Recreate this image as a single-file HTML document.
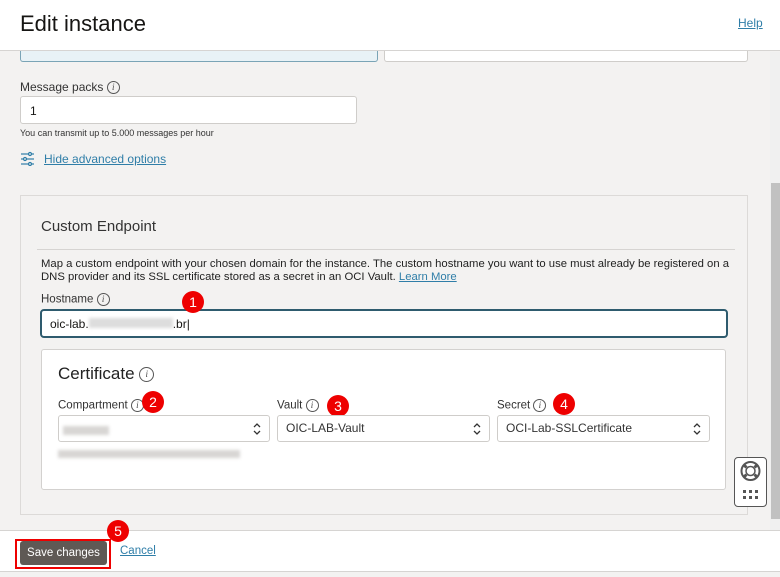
<!DOCTYPE html>
<html><head><style>
*{box-sizing:border-box;margin:0;padding:0}
body{width:780px;height:577px;overflow:hidden;background:#f3f2f1;font-family:"Liberation Sans",sans-serif;color:#161513;position:relative}
.abs{position:absolute}
.info{display:inline-block;width:13px;height:13px;border:1.3px solid #555;border-radius:50%;font-size:9px;text-align:center;line-height:11px;font-style:italic;color:#444;vertical-align:middle;font-family:"Liberation Serif",serif}
.badge{position:absolute;width:22px;height:22px;border-radius:50%;background:#e00;color:#fff;font-size:14px;text-align:center;line-height:22px}
.sel{position:absolute;height:27px;background:#fff;border:1px solid #cfcdca;border-radius:3px;font-size:12px;line-height:25px;padding-left:8px;color:#333}
.sel svg{position:absolute;right:8px;top:7px}
.blur{background:#d8d6d4;filter:blur(1.5px);position:absolute}
</style></head><body>
<div class="abs" style="left:0;top:0;width:780px;height:51px;background:#fff;border-bottom:1px solid #d6d4d2"></div>
<div class="abs" style="left:20px;top:11px;font-size:22px">Edit instance</div>
<div class="abs" style="left:738px;top:16px;font-size:12px;color:#2f7ea8;text-decoration:underline">Help</div>
<div class="abs" style="left:20px;top:51px;width:358px;height:11px;background:#e8f2f6;border:1px solid #7aa4b6;border-top:none;border-radius:0 0 3px 3px"></div>
<div class="abs" style="left:384px;top:51px;width:364px;height:11px;background:#fff;border:1px solid #cfcdca;border-top:none;border-radius:0 0 3px 3px"></div>
<div class="abs" style="left:20px;top:80px;font-size:12px;color:#333">Message packs <span class="info">i</span></div>
<div class="abs" style="left:20px;top:96px;width:337px;height:28px;background:#fff;border:1px solid #cfcdca;border-radius:3px;font-size:12px;padding:7px 9px">1</div>
<div class="abs" style="left:20px;top:128px;font-size:9px;color:#333">You can transmit up to 5.000 messages per hour</div>
<svg class="abs" style="left:20px;top:151px" width="15" height="15" viewBox="0 0 15 15" stroke="#2f7ea8" fill="none" stroke-width="1.2"><line x1="1" y1="3" x2="14" y2="3"/><circle cx="10" cy="3" r="1.5" fill="#f3f2f1"/><line x1="1" y1="8" x2="14" y2="8"/><circle cx="5" cy="8" r="1.5" fill="#f3f2f1"/><line x1="1" y1="13" x2="14" y2="13"/><circle cx="10" cy="13" r="1.5" fill="#f3f2f1"/></svg>
<div class="abs" style="left:44px;top:152px;font-size:12px;color:#2f7ea8;text-decoration:underline">Hide advanced options</div>
<div class="abs" style="left:20px;top:195px;width:728px;height:320px;border:1px solid #dcdad8"></div>
<div class="abs" style="left:41px;top:218px;font-size:15px;color:#333">Custom Endpoint</div>
<div class="abs" style="left:37px;top:249px;width:698px;height:1px;background:#d6d4d2"></div>
<div class="abs" style="left:41px;top:258px;width:690px;font-size:11.3px;line-height:13px;color:#222">Map a custom endpoint with your chosen domain for the instance. The custom hostname you want to use must already be registered on a DNS provider and its SSL certificate stored as a secret in an OCI Vault. <span style="color:#2f7ea8;text-decoration:underline">Learn More</span></div>
<div class="abs" style="left:41px;top:293px;font-size:11.5px;color:#333">Hostname <span class="info">i</span></div>
<div class="abs" style="left:40px;top:309px;width:688px;height:29px;background:#fff;border:2px solid #2e5b6e;border-radius:4px;font-size:12px;padding:6px 8px">oic-lab.<span style="display:inline-block;width:84px;height:10px;background:#ddd;filter:blur(1.5px)"></span>.br|</div>
<div class="badge" style="left:182px;top:291px">1</div>
<div class="abs" style="left:41px;top:349px;width:685px;height:141px;background:#fff;border:1px solid #d3d1cf;border-radius:3px"></div>
<div class="abs" style="left:58px;top:364px;font-size:17px;color:#222">Certificate <span class="info" style="width:15px;height:15px;line-height:13px">i</span></div>
<div class="abs" style="left:58px;top:399px;font-size:11.5px;color:#333">Compartment <span class="info">i</span></div>
<div class="badge" style="left:142px;top:391px">2</div>
<div class="abs" style="left:277px;top:399px;font-size:11.5px;color:#333">Vault <span class="info">i</span></div>
<div class="badge" style="left:327px;top:395px">3</div>
<div class="abs" style="left:497px;top:399px;font-size:11.5px;color:#333">Secret <span class="info">i</span></div>
<div class="badge" style="left:553px;top:393px">4</div>
<div class="sel" style="left:58px;top:415px;width:212px"><span class="blur" style="left:4px;top:10px;width:46px;height:9px"></span><svg width="8" height="12" viewBox="0 0 8 12" fill="none" stroke="#333" stroke-width="1.3"><path d="M1 4L4 1L7 4M1 8L4 11L7 8"/></svg></div>
<div class="sel" style="left:277px;top:415px;width:213px">OIC-LAB-Vault<svg width="8" height="12" viewBox="0 0 8 12" fill="none" stroke="#333" stroke-width="1.3"><path d="M1 4L4 1L7 4M1 8L4 11L7 8"/></svg></div>
<div class="sel" style="left:497px;top:415px;width:213px">OCI-Lab-SSLCertificate<svg width="8" height="12" viewBox="0 0 8 12" fill="none" stroke="#333" stroke-width="1.3"><path d="M1 4L4 1L7 4M1 8L4 11L7 8"/></svg></div>
<div class="blur" style="left:58px;top:450px;width:182px;height:8px"></div>
<div class="abs" style="left:734px;top:457px;width:33px;height:50px;background:#fff;border:1.5px solid #555;border-radius:4px"></div>
<svg class="abs" style="left:738px;top:460px" width="25" height="44" viewBox="0 0 25 44"><circle cx="12.5" cy="11" r="9" fill="none" stroke="#555" stroke-width="2"/><circle cx="12.5" cy="11" r="4.5" fill="none" stroke="#555" stroke-width="1.5"/><g stroke="#555" stroke-width="3"><line x1="6" y1="5" x2="8.5" y2="7.5"/><line x1="19" y1="5" x2="16.5" y2="7.5"/><line x1="6" y1="17" x2="8.5" y2="14.5"/><line x1="19" y1="17" x2="16.5" y2="14.5"/></g><g fill="#555"><rect x="5" y="30" width="3" height="3"/><rect x="11" y="30" width="3" height="3"/><rect x="17" y="30" width="3" height="3"/><rect x="5" y="36" width="3" height="3"/><rect x="11" y="36" width="3" height="3"/><rect x="17" y="36" width="3" height="3"/></g></svg>
<div class="abs" style="left:770px;top:52px;width:10px;height:478px;background:#f0f0f0"></div>
<div class="abs" style="left:771px;top:183px;width:9px;height:336px;background:#c1c1c1"></div>
<div class="abs" style="left:0;top:530px;width:780px;height:42px;background:#fff;border-top:1px solid #d6d4d2;border-bottom:1px solid #d6d4d2"></div>
<div class="abs" style="left:15px;top:539px;width:96px;height:30px;border:2px solid #e00"></div>
<div class="abs" style="left:20px;top:541px;width:87px;height:24px;background:#5f5955;border-radius:3px;color:#fff;font-size:11.5px;text-align:center;line-height:24px">Save changes</div>
<div class="abs" style="left:120px;top:545px;font-size:11.5px;color:#2f7ea8;text-decoration:underline">Cancel</div>
<div class="badge" style="left:107px;top:520px">5</div>
</body></html>
